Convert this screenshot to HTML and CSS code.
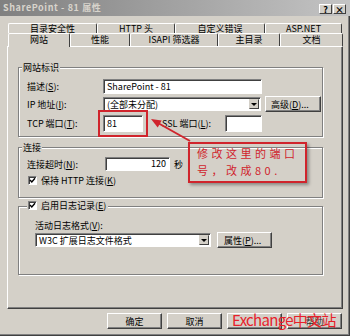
FILE: index.html
```html
<!DOCTYPE html>
<html lang="zh-CN">
<head>
    <meta charset="UTF-8">
    <title>SharePoint - 81 属性</title>
    <link rel="stylesheet" href="styles.css">
</head>
<body>
    <div class="window">
        <div class="title-bar">
            <span class="title-text">SharePoint - 81 属性</span>
            <div class="title-buttons">
                <span class="title-btn">?</span>
                <span class="title-btn">×</span>
            </div>
        </div>

        <!-- Tabs -->
        <div class="tabs">
            <div class="tab-row back">
                <div class="tab">目录安全性</div>
                <div class="tab">HTTP 头</div>
                <div class="tab">自定义错误</div>
                <div class="tab">ASP.NET</div>
            </div>
            <div class="tab-row front">
                <div class="tab active">网站</div>
                <div class="tab">性能</div>
                <div class="tab">ISAPI 筛选器</div>
                <div class="tab">主目录</div>
                <div class="tab">文档</div>
            </div>
        </div>

        <div class="panel">
            <!-- 网站标识 -->
            <div class="group group-site">
                <div class="legend">网站标识</div>
                <div class="row row-desc">
                    <span class="label">描述(<u>S</u>):</span>
                    <div class="textbox tb-desc">SharePoint - 81</div>
                </div>
                <div class="row row-ip">
                    <span class="label">IP 地址(<u>I</u>):</span>
                    <div class="combo combo-ip">
                        <span class="combo-text">(全部未分配)</span>
                        <span class="combo-arrow"></span>
                    </div>
                    <button class="btn btn-advanced">高级(<u>D</u>)...</button>
                </div>
                <div class="row row-port">
                    <span class="label">TCP 端口(<u>T</u>):</span>
                    <div class="textbox tb-tcp">81</div>
                    <span class="label label-ssl">SSL 端口(<u>L</u>):</span>
                    <div class="textbox tb-ssl"></div>
                </div>
            </div>

            <!-- 连接 -->
            <div class="group group-conn">
                <div class="legend">连接</div>
                <div class="row row-timeout">
                    <span class="label label-timeout">连接超时(<u>N</u>):</span>
                    <div class="textbox tb-timeout">120</div>
                    <span class="unit">秒</span>
                </div>
                <div class="check-row">
                    <span class="check">
                        <svg width="7" height="7" viewBox="0 0 7 7"><polyline points="1,3 2.8,5 6,1.2" fill="none" stroke="#000" stroke-width="1.4"/></svg>
                    </span>
                    <span>保持 HTTP 连接(<u>K</u>)</span>
                </div>
            </div>

            <!-- 日志 -->
            <div class="group group-log">
                <div class="legend legend-check">
                    <span class="check">
                        <svg width="7" height="7" viewBox="0 0 7 7"><polyline points="1,3 2.8,5 6,1.2" fill="none" stroke="#000" stroke-width="1.4"/></svg>
                    </span>
                    <span>启用日志记录(<u>E</u>)</span>
                </div>
                <div class="log-label">活动日志格式(<u>V</u>):</div>
                <div class="row row-log">
                    <div class="combo combo-log">
                        <span class="combo-text">W3C 扩展日志文件格式</span>
                        <span class="combo-arrow"></span>
                    </div>
                    <button class="btn btn-props">属性(<u>P</u>)...</button>
                </div>
            </div>
        </div>

        <div class="dialog-buttons">
            <button class="btn">确定</button>
            <button class="btn">取消</button>
            <button class="btn disabled"></button>
            <button class="btn btn-help">帮助</button>
        </div>

        <!-- annotation over the screenshot -->
        <svg class="arrow" width="50" height="35" viewBox="0 0 50 35">
            <line x1="45" y1="29" x2="13" y2="11" stroke="#d0242c" stroke-width="2"/>
            <polygon points="6,7 16.7,8.4 12.7,15.4" fill="#d0242c"/>
        </svg>
        <div class="note">修改这里的端口<br>号，改成80.</div>
        <div class="watermark">Exchange中文站</div>
    </div>
</body>
</html>
```

FILE: styles.css
```css
:root {
    --face: #d4d0c8;
    --shadow: #808080;
    --dark: #404040;
    --light: #ffffff;
    --note-red: #d0242c;
}

* {
    margin: 0;
    padding: 0;
    box-sizing: border-box;
}

body {
    background: var(--face);
    font-family: "Noto Sans CJK SC", sans-serif;
    font-size: 9px;
    color: #000;
}

u {
    text-decoration: underline;
}

.window {
    position: relative;
    width: 350px;
    height: 336px;
    background: var(--face);
    display: flex;
    flex-direction: column;
    overflow: hidden;
    box-shadow: inset -1px -1px 0 var(--dark), inset -2px -2px 0 var(--shadow);
}

/* Title bar */
.title-bar {
    height: 16px;
    display: flex;
    align-items: center;
    justify-content: space-between;
    padding: 0 4px 0 3px;
    background: linear-gradient(to right, #808080, #c4c4c4);
}

.title-text {
    color: #d8d4cc;
    font-weight: bold;
    letter-spacing: 0.6px;
    line-height: 16px;
}

.title-buttons {
    display: flex;
    gap: 1px;
    margin-top: 2px;
}

.title-btn {
    width: 13px;
    height: 10px;
    display: flex;
    align-items: center;
    justify-content: center;
    background: var(--face);
    border: 1px solid;
    border-color: var(--light) var(--dark) var(--dark) var(--light);
    font-weight: bold;
    font-size: 9px;
    line-height: 1;
}

/* Tabs */
.tabs {
    margin-top: 7px;
    padding-left: 8px;
}

.tab-row {
    display: grid;
}

.tab-row.back {
    height: 10px;
    grid-template-columns: 89px 78px 90px 77px;
}

.tab-row.front {
    height: 13px;
    grid-template-columns: 62px 60px 88px 62px 63px;
}

.tab {
    text-align: center;
    border-top: 1px solid var(--light);
    border-left: 1px solid var(--light);
    border-right: 1px solid var(--dark);
    border-radius: 2px 2px 0 0;
    line-height: 9px;
    background: var(--face);
}

.tab-row.front .tab {
    line-height: 12px;
}

.tab.active {
    position: relative;
    z-index: 1;
    height: 14px;
}

/* Panel */
.panel {
    margin-left: 7px;
    width: 336px;
    height: 263px;
    border-top: 1px solid var(--light);
    border-left: 1px solid var(--light);
    border-right: 1px solid var(--dark);
    border-bottom: 1px solid var(--dark);
    box-shadow: inset -1px -1px 0 var(--shadow);
    padding: 10px 0 0 10px;
}

.group {
    width: 305px;
    border: 1px solid var(--shadow);
    box-shadow: inset 1px 1px 0 var(--light), 1px 1px 0 var(--light);
    padding-left: 8px;
}

.legend {
    width: fit-content;
    margin: -6px 0 0 -5px;
    padding: 0 1px;
    background: var(--face);
    line-height: 11px;
}

.row {
    display: flex;
    align-items: center;
    height: 16px;
}

.label {
    width: 76px;
    white-space: nowrap;
}

/* Sunken fields */
.textbox,
.combo {
    background: #fff;
    border: 1px solid;
    border-color: var(--shadow) var(--light) var(--light) var(--shadow);
    box-shadow: inset 1px 1px 0 var(--dark);
    white-space: nowrap;
}

.textbox {
    height: 15px;
    padding: 0 3px;
    line-height: 13px;
}

.combo {
    height: 14px;
    display: flex;
    align-items: stretch;
    padding: 1px 1px 1px 2px;
}

.combo-text {
    flex: 1;
    line-height: 11px;
    padding-left: 1px;
}

.combo-arrow {
    width: 10px;
    background: var(--face);
    border: 1px solid;
    border-color: var(--face) var(--dark) var(--dark) var(--face);
    display: flex;
    align-items: center;
    justify-content: center;
}

.combo-arrow::before {
    content: "";
    border-left: 3px solid transparent;
    border-right: 3px solid transparent;
    border-top: 3px solid #000;
}

/* Raised buttons */
.btn {
    height: 16px;
    background: var(--face);
    border: 1px solid;
    border-color: var(--light) var(--dark) var(--dark) var(--light);
    box-shadow: inset -1px -1px 0 var(--shadow);
    font: inherit;
    color: #000;
    line-height: 1;
    display: flex;
    align-items: center;
    justify-content: center;
}

/* 网站标识 */
.group-site {
    margin-top: 10px;
    padding-bottom: 4px;
}

.row-desc {
    margin-top: 5px;
}

.tb-desc {
    width: 159px;
}

.row-ip {
    margin-top: 2px;
}

.combo-ip {
    width: 158px;
}

.btn-advanced {
    width: 56px;
    margin-left: 4px;
    justify-content: flex-start;
    padding-left: 5px;
}

.row-port {
    margin-top: 3px;
    height: 17px;
}

.row-port .textbox {
    height: 17px;
    line-height: 15px;
}

.tb-tcp {
    width: 40px;
    outline: 2px solid var(--note-red);
    outline-offset: 3px;
}

.label-ssl {
    width: 63px;
    margin-left: 19px;
}

.tb-ssl {
    width: 37px;
}

/* 连接 */
.group-conn {
    margin-top: 10px;
    padding-bottom: 11px;
}

.row-timeout {
    margin-top: 3px;
}

.label-timeout {
    width: 78px;
}

.tb-timeout {
    width: 65px;
    height: 14px;
    line-height: 12px;
    text-align: right;
}

.unit {
    margin-left: 4px;
}

.check-row {
    margin-top: 3px;
    height: 11px;
    display: flex;
    align-items: center;
    gap: 4px;
    padding-left: 1px;
}

.check {
    width: 9px;
    height: 9px;
    background: #fff;
    border: 1px solid;
    border-color: var(--shadow) var(--light) var(--light) var(--shadow);
    box-shadow: inset 1px 1px 0 var(--dark);
    display: flex;
    align-items: center;
    justify-content: center;
}

/* 日志 */
.group-log {
    margin-top: 8px;
    padding-bottom: 26px;
}

.legend-check {
    display: flex;
    align-items: center;
    gap: 4px;
    margin: -7px 0 0 0;
    padding: 0 2px 0 1px;
}

.log-label {
    margin: 9px 0 0 8px;
    line-height: 11px;
}

.row-log {
    margin: 1px 0 0 8px;
}

.combo-log {
    width: 176px;
}

.btn-props {
    width: 55px;
    margin-left: 6px;
    justify-content: flex-start;
    padding-left: 6px;
}

/* Dialog buttons */
.dialog-buttons {
    margin-top: 4px;
    display: flex;
    justify-content: flex-end;
    gap: 5px;
    padding-right: 8px;
}

.dialog-buttons .btn {
    width: 55px;
}

.btn-help {
    color: #303030;
}

/* Annotation overlays */
.arrow {
    position: absolute;
    left: 145px;
    top: 112px;
}

.note {
    position: absolute;
    left: 188px;
    top: 142px;
    width: 119px;
    height: 41px;
    border: 2px solid var(--note-red);
    box-shadow: 2px 2px 3px rgba(0, 0, 0, 0.35);
    padding: 1px 0 0 7px;
    color: var(--note-red);
    font-size: 11px;
    letter-spacing: 3.5px;
    line-height: 17px;
    white-space: nowrap;
}

.watermark {
    position: absolute;
    left: 232px;
    top: 311px;
    color: #e8202a;
    font-size: 15px;
    letter-spacing: -0.7px;
    line-height: 18px;
    white-space: nowrap;
}
```
